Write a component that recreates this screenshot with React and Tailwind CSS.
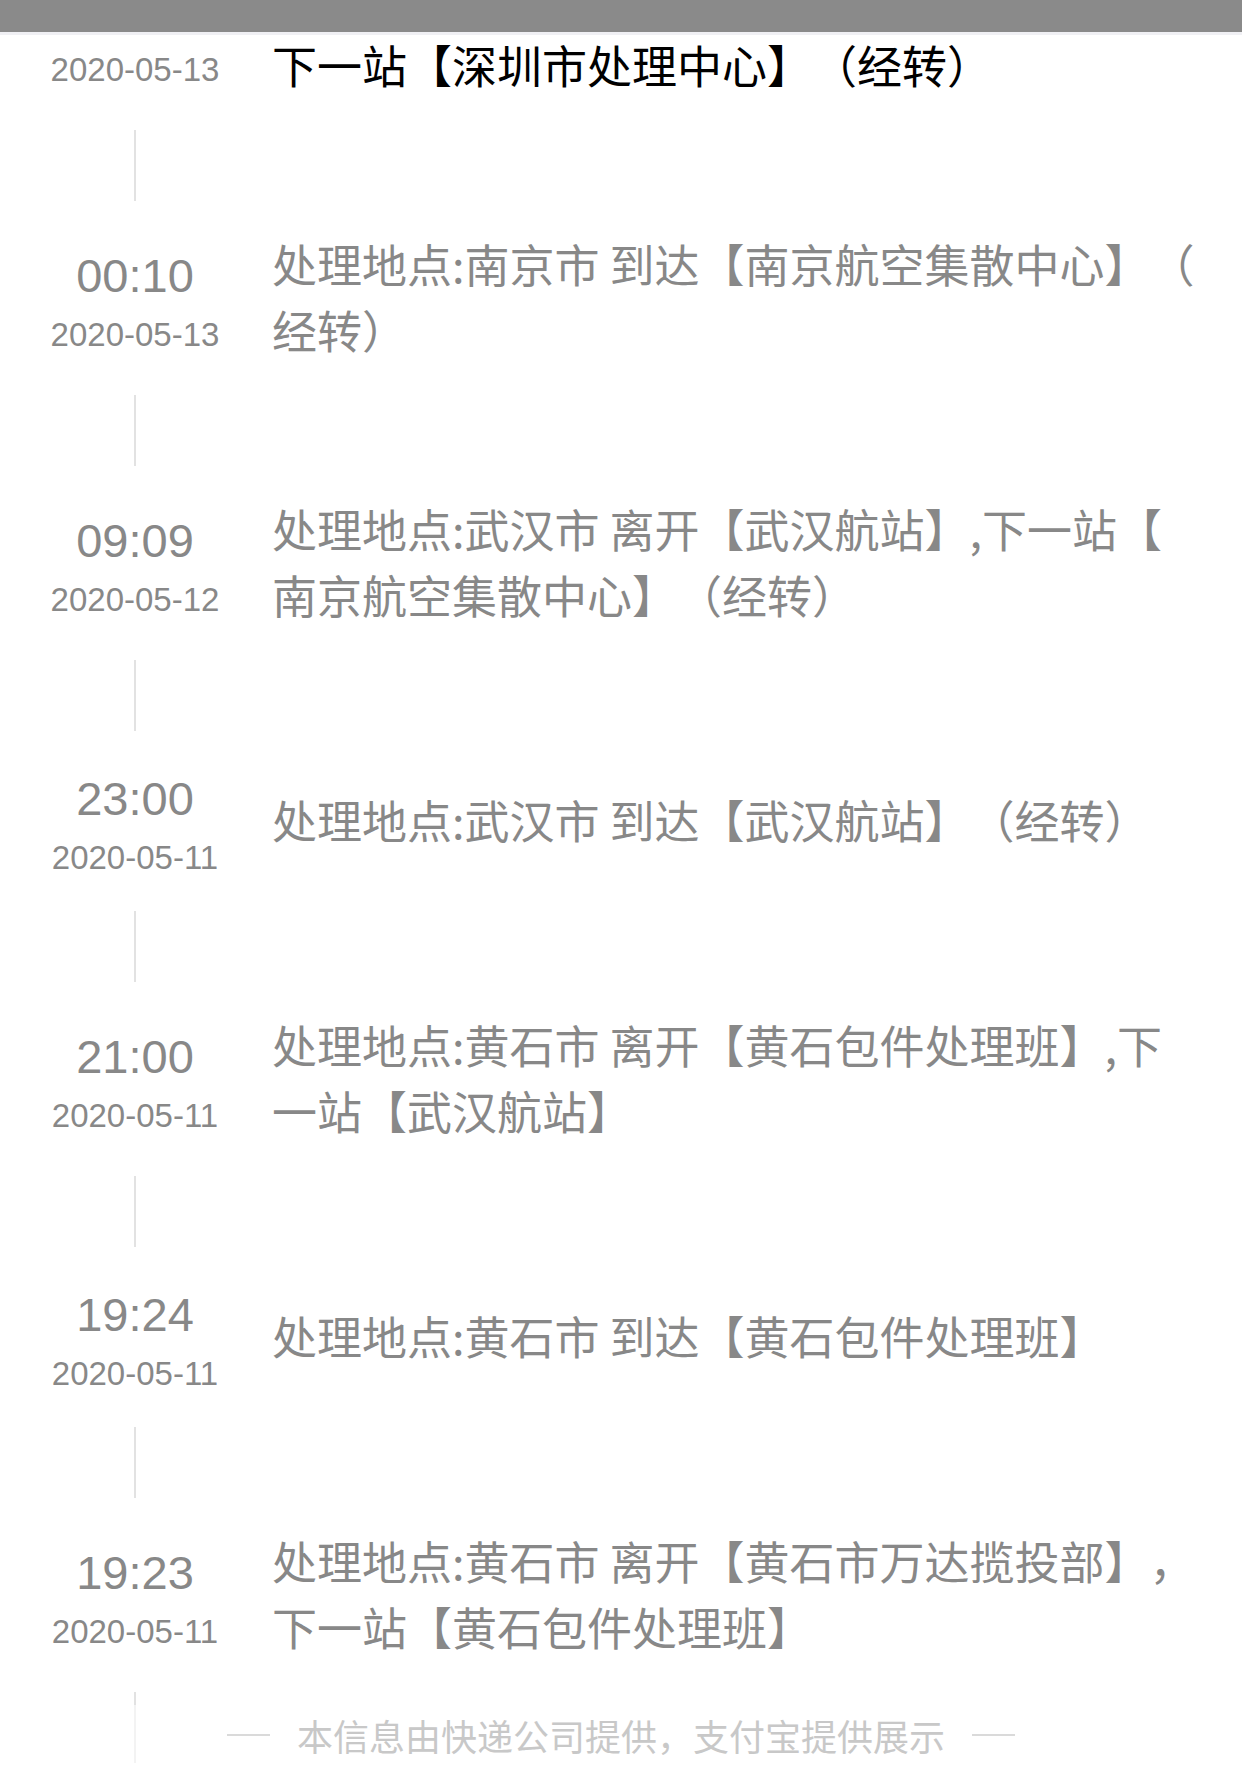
import React from "react";

// the first entry is scrolled up under the top bar: only its date and last line show
const items = [
  {
    time: null,
    date: "2020-05-13",
    lines: [null, "下一站【深圳市处理中心】（经转）"],
    active: true,
  },
  {
    time: "00:10",
    date: "2020-05-13",
    lines: ["处理地点:南京市 到达【南京航空集散中心】（", "经转）"],
  },
  {
    time: "09:09",
    date: "2020-05-12",
    lines: ["处理地点:武汉市 离开【武汉航站】,下一站【", "南京航空集散中心】（经转）"],
  },
  {
    time: "23:00",
    date: "2020-05-11",
    lines: ["处理地点:武汉市 到达【武汉航站】（经转）"],
  },
  {
    time: "21:00",
    date: "2020-05-11",
    lines: ["处理地点:黄石市 离开【黄石包件处理班】,下", "一站【武汉航站】"],
  },
  {
    time: "19:24",
    date: "2020-05-11",
    lines: ["处理地点:黄石市 到达【黄石包件处理班】"],
  },
  {
    time: "19:23",
    date: "2020-05-11",
    lines: ["处理地点:黄石市 离开【黄石市万达揽投部】，", "下一站【黄石包件处理班】"],
  },
];

function Item({ time, date, lines, active }) {
  return (
    <div>
      <div className="flex items-center pt-[27px] pb-[35px]">
        <div className="w-[270px] shrink-0 flex flex-col items-center pt-[17px] font-['Liberation_Sans',Arial,sans-serif] text-[#888888]">
          <div className="h-[48px] text-[47px] leading-[48px]">{time}</div>
          <div className="mt-[17px] text-[33px] leading-[36px]">{date}</div>
        </div>
        <div
          className={`pl-[2px] translate-y-[3px] text-[45px] leading-[66px] font-['Noto_Sans_CJK_SC',sans-serif] [text-spacing-trim:space-all] ${
            active ? "text-black" : "text-[#888888]"
          }`}
        >
          {lines.map((line, i) => (
            <div key={i} className="h-[66px] whitespace-nowrap">
              {line}
            </div>
          ))}
        </div>
      </div>
      <div className="w-[270px] flex justify-center">
        <div className="w-[2px] h-[71px] bg-[#e2e2e2]" />
      </div>
    </div>
  );
}

export default function App() {
  return (
    <div className="relative h-[1781px] overflow-hidden bg-white">
      <div className="-mt-[64px]">
        {items.map((it, i) => (
          <Item key={i} {...it} />
        ))}
      </div>

      <div className="absolute top-0 inset-x-0 flex flex-col">
        <div className="h-[32px] bg-[#8a8a8a]" />
        <div className="h-[3px] bg-[#f0f0f4]" />
      </div>

      <div className="absolute bottom-0 inset-x-0 h-[76px] bg-white/60 flex justify-center items-start pt-[12px]">
        <div className="flex items-center gap-[27px] font-['Noto_Sans_CJK_SC',sans-serif] text-[36px] leading-[36px] text-[#c8c8c8]">
          <div className="w-[43px] h-[2px] bg-[#dadada]" />
          <span>本信息由快递公司提供，支付宝提供展示</span>
          <div className="w-[43px] h-[2px] bg-[#dadada]" />
        </div>
      </div>
    </div>
  );
}
